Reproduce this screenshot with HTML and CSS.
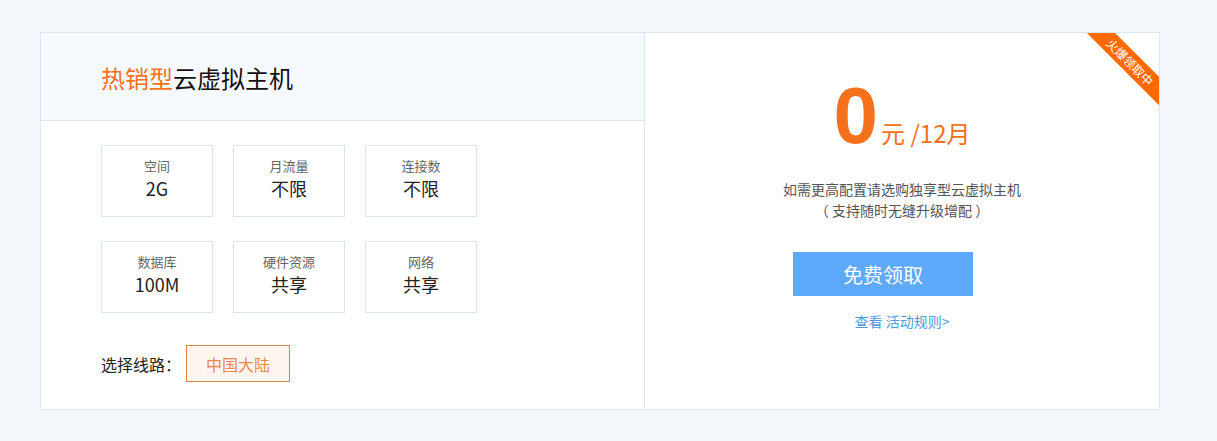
FILE: index.html
```html
<!DOCTYPE html>
<html lang="zh-CN">
<head>
  <meta charset="UTF-8">
  <title>热销型云虚拟主机</title>
  <link rel="stylesheet" href="styles.css">
</head>
<body>

  <div class="carte">
    <!-- Partie gauche : caractéristiques -->
    <div class="gauche">
      <div class="entete">
        <h1><span class="orange">热销型</span>云虚拟主机</h1>
      </div>
      <div class="corps">
        <div class="grille">
          <div class="case"><p class="label">空间</p><p class="valeur">2G</p></div>
          <div class="case"><p class="label">月流量</p><p class="valeur">不限</p></div>
          <div class="case"><p class="label">连接数</p><p class="valeur">不限</p></div>
          <div class="case"><p class="label">数据库</p><p class="valeur">100M</p></div>
          <div class="case"><p class="label">硬件资源</p><p class="valeur">共享</p></div>
          <div class="case"><p class="label">网络</p><p class="valeur">共享</p></div>
        </div>
        <div class="ligne">
          <span>选择线路：</span>
          <button class="choix">中国大陆</button>
        </div>
      </div>
    </div>

    <!-- Partie droite : prix -->
    <div class="droite">
      <div class="ruban">火爆领取中</div>
      <div class="prix"><span class="zero">0</span><span class="unite">元 /12月</span></div>
      <p class="info">如需更高配置请选购独享型云虚拟主机<br>（ 支持随时无缝升级增配 ）</p>
      <button class="gratuit">免费领取</button>
      <a class="regles" href="#">查看 活动规则&gt;</a>
    </div>
  </div>

</body>
</html>
```

FILE: styles.css
```css
body {
  margin: 0;
  background-color: #f3f6fa;
  font-family: "Noto Sans CJK SC", "Liberation Sans", sans-serif;
  color: #222;
}

.carte {
  margin: 32px 0 0 40px;
  width: 1118px;
  height: 376px;
  border: 1px solid #dbe7f3;
  background: white;
  display: grid;
  grid-template-columns: 604px 1fr;
}

.gauche {
  border-right: 1px solid #dbe7f3;
  display: flex;
  flex-direction: column;
}

.entete {
  height: 87px;
  background-color: #f6f9fe;
  border-bottom: 1px solid #dbe7f3;
  display: flex;
  align-items: center;
  padding-left: 60px;
}

.entete h1 {
  margin: 2px 0 0 0;
  font-size: 24px;
  font-weight: normal;
  color: #111;
}

.orange {
  color: #f5711c;
}

.corps {
  padding: 24px 0 0 60px;
}

.grille {
  display: grid;
  grid-template-columns: repeat(3, 112px);
  grid-auto-rows: 72px;
  column-gap: 20px;
  row-gap: 24px;
}

.case {
  box-sizing: border-box;
  border: 1px solid #d8e6f3;
  text-align: center;
  padding-top: 10px;
}

.case p {
  margin: 0;
}

.label {
  font-size: 13px;
  line-height: 20px;
  color: #666;
}

.valeur {
  font-size: 18px;
  line-height: 24px;
  color: #222;
}

.ligne {
  margin-top: 32px;
  display: flex;
  align-items: center;
  font-size: 16px;
  color: #222;
}

.choix {
  margin-left: 5px;
  width: 104px;
  height: 37px;
  border: 1px solid #e5843f;
  background-color: #fff6f0;
  color: #f0874a;
  font-family: inherit;
  font-size: 16px;
  cursor: pointer;
}

.droite {
  position: relative;
  overflow: hidden;
  display: flex;
  flex-direction: column;
  align-items: center;
  padding-top: 35px;
}

.ruban {
  position: absolute;
  top: 19px;
  right: -31px;
  width: 120px;
  height: 20px;
  line-height: 20px;
  background-color: #ff6a00;
  color: white;
  font-size: 12px;
  text-align: center;
  transform: rotate(45deg);
}

.prix {
  color: #f5711c;
  display: flex;
  align-items: baseline;
  height: 96px;
}

.zero {
  font-family: "Liberation Sans", Arial, sans-serif;
  font-weight: bold;
  font-size: 80px;
  line-height: 96px;
}

.unite {
  font-size: 24px;
  margin-left: 3px;
}

.info {
  margin: 15px 0 0 0;
  font-size: 14px;
  line-height: 21px;
  color: #555;
  text-align: center;
}

.gratuit {
  margin-top: 31px;
  margin-right: 38px;
  width: 180px;
  height: 44px;
  border: none;
  background-color: #5ea9fb;
  color: white;
  font-family: inherit;
  font-size: 20px;
  cursor: pointer;
}

.regles {
  margin-top: 15px;
  font-size: 14px;
  color: #4b9be6;
  text-decoration: none;
}
```
